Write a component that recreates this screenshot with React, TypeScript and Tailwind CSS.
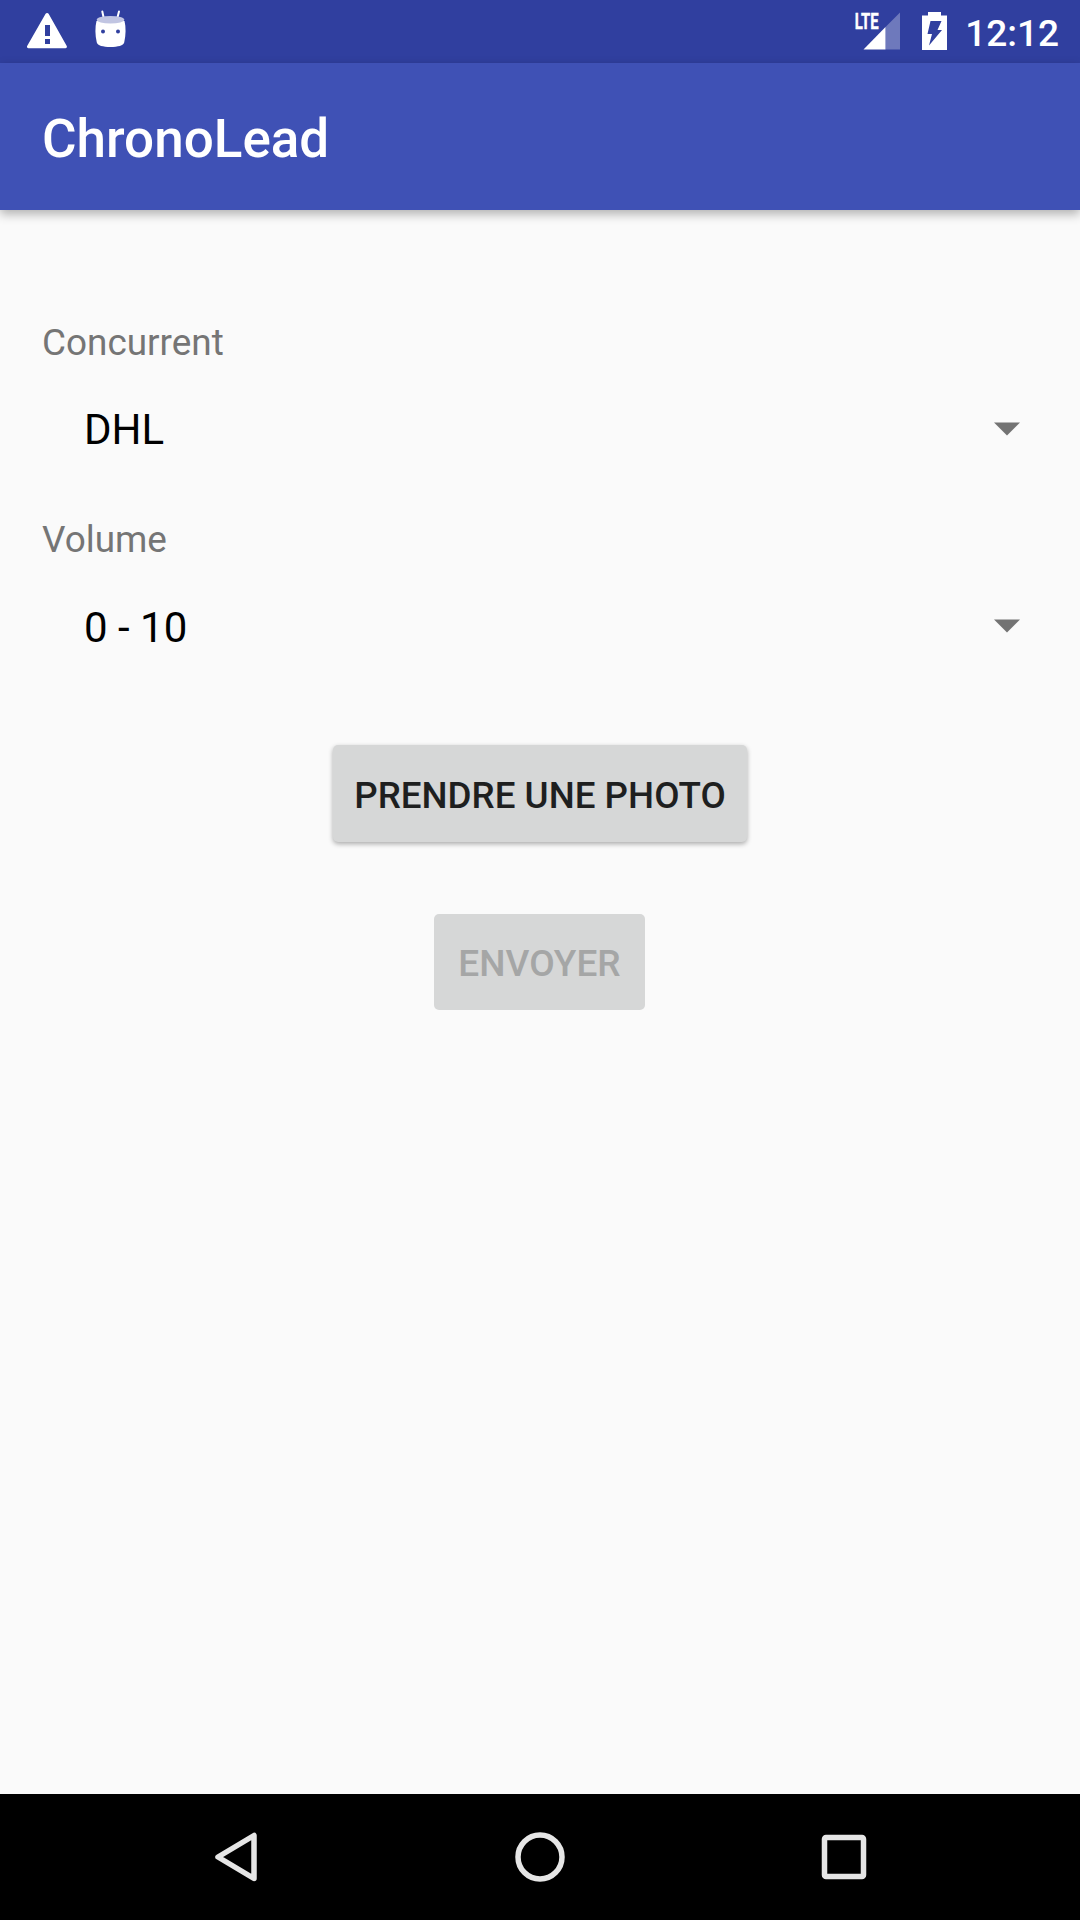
import { ReactNode } from "react"

type SpinnerProps = {
  label: string
  value: string
}

// Label with the dropdown row under it
function Spinner({ label, value }: SpinnerProps) {
  return (
    <div className="flex flex-col">
      <span className="h-[50px] pl-[42px] text-[36.9px] leading-[50px] text-[#757575]">{label}</span>
      <div className="mt-[30.4px] flex h-[64px] items-center justify-between pr-[59.5px] pl-[84px]">
        <span className="text-[42px] leading-[64px] text-black">{value}</span>
        <svg width="28" height="16" viewBox="0 0 28 16" className="mt-[-3px]">
          <path d="M1 1.5h26L14 14.5z" fill="#737373" />
        </svg>
      </div>
    </div>
  )
}

function NavButton({ children }: { children: ReactNode }) {
  return (
    <button className="flex h-[126px] w-[304px] items-center justify-center">
      <svg width="64" height="64" viewBox="0 0 64 64" fill="none" stroke="#e6e6e6" strokeWidth="5.5">
        {children}
      </svg>
    </button>
  )
}

function StatusBar() {
  return (
    <div className="flex h-[63px] items-start justify-between bg-[#303f9f] text-white">
      <div className="flex gap-[27px] pt-[10px] pl-[27px]">
        {/* Warning */}
        <svg width="41" height="40" viewBox="0 0 41 40">
          <path
            d="M18.6 3.8a1.8 1.8 0 0 1 3 0l18 32a1.5 1.5 0 0 1-1.3 2.4H1.6a1.5 1.5 0 0 1-1.3-2.4z"
            fill="#fff"
          />
          <path d="M18 15h5v11h-5zM18 29h5v5h-5z" fill="#303f9f" />
        </svg>
        {/* Debug bridge */}
        <svg width="31" height="40" viewBox="0 0 31 40">
          <path d="M7.3 1.5l1.5 7M24 1.5l-1.8 7" stroke="#fff" strokeWidth="2" strokeLinecap="round" />
          <path
            d="M1.5 11C0 17 0 25 1.8 32.5 2.5 35.500 8 37 15.5 37s13-1.5 13.7-4.5C31 25 31 17 29.5 11z"
            fill="#fff"
          />
          <ellipse cx="15.5" cy="9.8" rx="13.8" ry="3.8" fill="#c1c5e2" />
          <circle cx="8" cy="21.5" r="2" fill="#303f9f" />
          <circle cx="23" cy="21.5" r="2" fill="#303f9f" />
        </svg>
      </div>

      <div className="flex pr-[21px]">
        {/* Signal */}
        <svg width="48" height="52" viewBox="0 0 48 52" className="mr-[20px]">
          <path d="M46 12.5v37H31.5V27z" fill="#fff" fillOpacity=".3" />
          <path d="M31.5 27v22.5H9.5z" fill="#fff" />
          <text
            x="0.7"
            y="29.3"
            textLength="24"
            lengthAdjust="spacingAndGlyphs"
            fill="#fff"
            stroke="#fff"
            strokeWidth=".4"
            fontSize="22.5"
            fontWeight="700"
          >
            LTE
          </text>
        </svg>
        {/* Battery */}
        <svg width="25" height="52" viewBox="0 0 25 52" className="mr-[18px]">
          <path d="M6 12h13v3.5h6V50H0V15.5h6z" fill="#fff" />
          <path d="M8.5 21h11l-4 9H20L7 45.5l3-11.5H5.5z" fill="#303f9f" />
        </svg>
        <span className="text-[37px] leading-[68px] font-medium">12:12</span>
      </div>
    </div>
  )
}

export default function App() {
  const spinners = [
    { label: "Concurrent", value: "DHL" },
    { label: "Volume", value: "0 - 10" },
  ]

  return (
    <div className="flex h-[1920px] w-[1080px] flex-col overflow-hidden bg-[#fafafa] font-['Roboto',sans-serif]">
      <StatusBar />

      {/* App bar */}
      <header className="flex h-[147px] items-center bg-[#3f51b5] pt-[4px] pl-[42px] shadow-[0_4px_10px_rgba(0,0,0,0.3)]">
        <h1 className="text-[53px] leading-[60px] font-medium text-white">ChronoLead</h1>
      </header>

      {/* Form */}
      <main className="flex flex-1 flex-col pt-[108px]">
        <div className="flex flex-col gap-[53px]">
          {spinners.map((spinner) => (
            <Spinner key={spinner.label} label={spinner.label} value={spinner.value} />
          ))}
        </div>
        <div className="mt-[85.2px] flex flex-col items-center gap-[72px]">
          <button className="h-[97px] w-[414px] rounded-[5px] bg-[#d6d7d7] pt-[6px] text-[36.75px] leading-[44px] font-medium whitespace-nowrap text-[#1e1f1f] shadow-[0_2px_5px_rgba(0,0,0,0.32)]">
            PRENDRE UNE PHOTO
          </button>
          <button
            disabled
            className="mr-px h-[96px] w-[211px] rounded-[5px] bg-[#d6d7d7] pt-[4px] text-[37px] leading-[44px] font-medium text-[#a5a6a6]"
          >
            ENVOYER
          </button>
        </div>
      </main>

      {/* Navigation bar */}
      <nav className="flex h-[126px] justify-center bg-black">
        <NavButton>
          <path d="M14 32L50 10.5v43z" strokeLinejoin="round" />
        </NavButton>
        <NavButton>
          <circle cx="32" cy="32" r="22" />
        </NavButton>
        <NavButton>
          <rect x="12.5" y="12.5" width="39" height="39" rx="1.5" />
        </NavButton>
      </nav>
    </div>
  )
}
